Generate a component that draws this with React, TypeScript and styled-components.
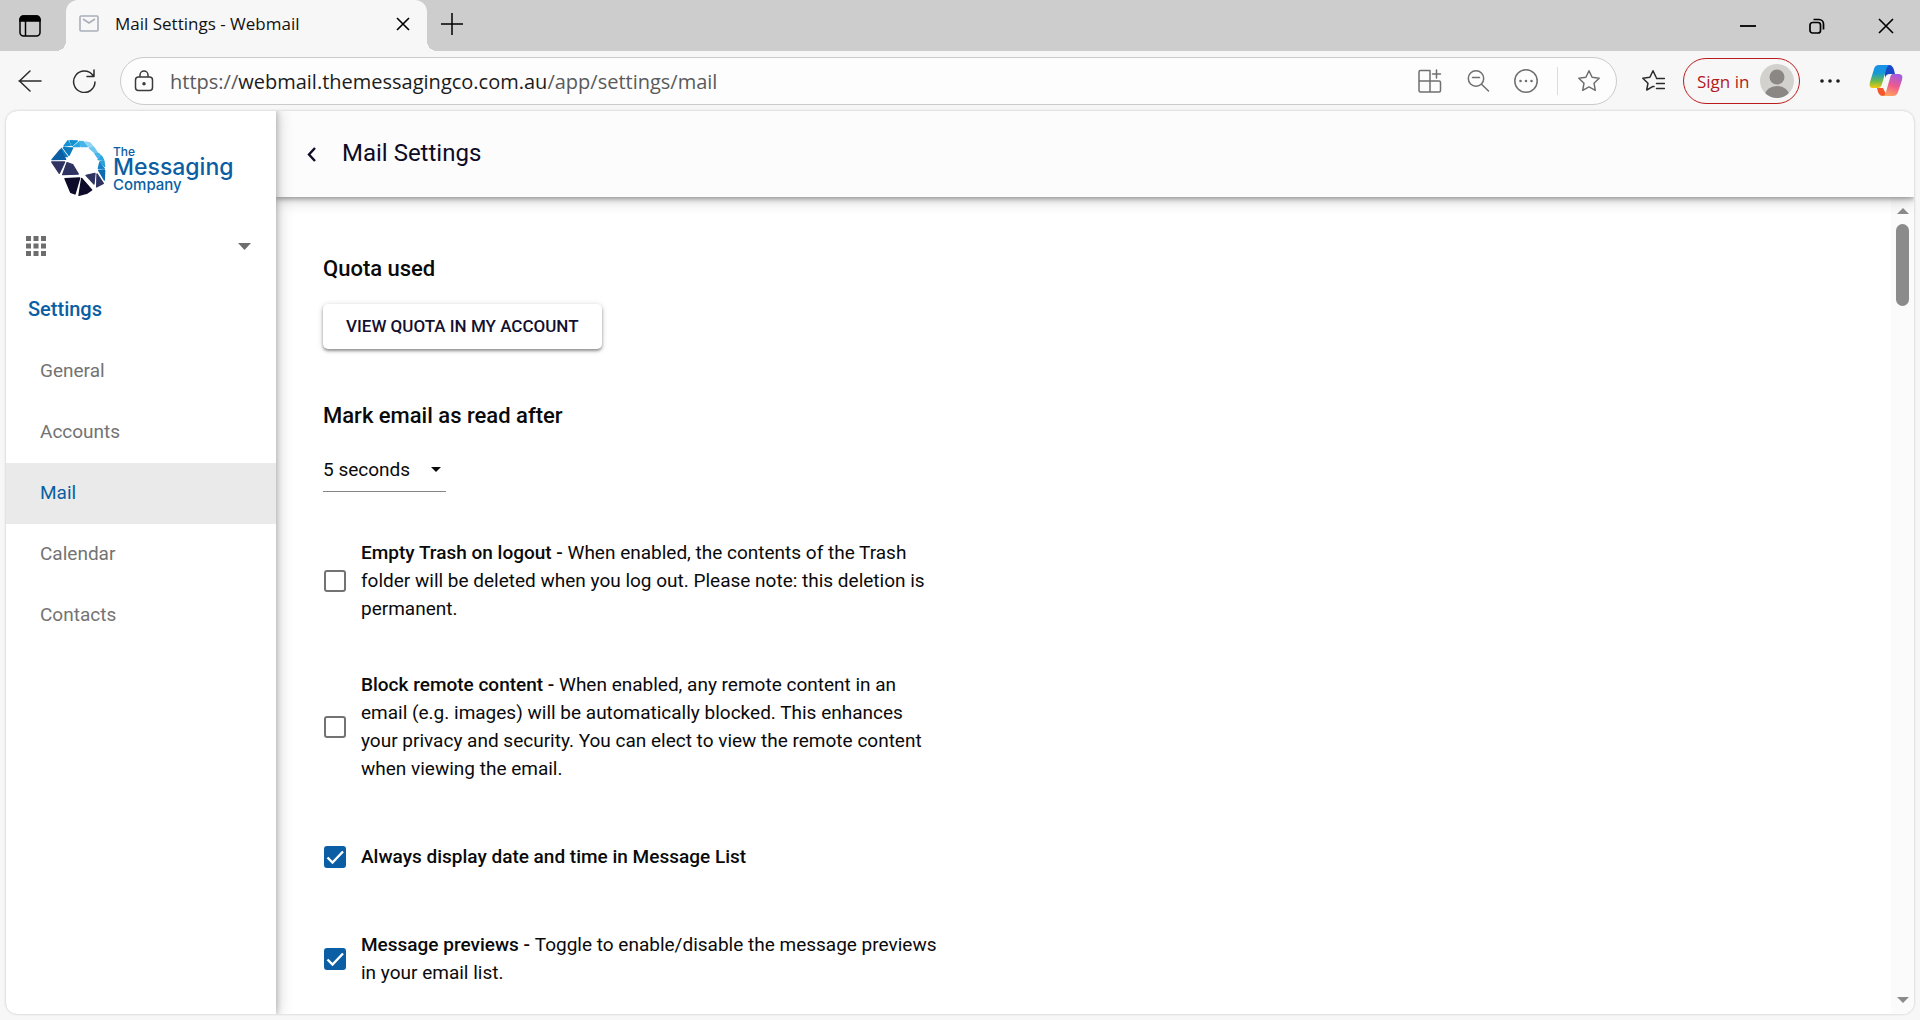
import React, { useState } from "react";
import styled, { createGlobalStyle } from "styled-components";

const ui = `"Open Sans", "Noto Sans", sans-serif`;
const roboto = `Roboto, "Liberation Sans", sans-serif`;

const Global = createGlobalStyle`
  *, *::before, *::after { box-sizing: border-box; }
  body { margin: 0; background: #f7f7f7; }
  button, input, select { font: inherit; color: inherit; }
  button { border: 0; background: none; padding: 0; cursor: pointer; }
`;

const Window = styled.div`
  display: flex;
  flex-direction: column;
  height: 100vh;
  overflow: hidden;
  font-family: ${ui};
  color: #1b1b1b;
`;

const TitleBar = styled.header`
  display: flex;
  flex: none;
  height: 51px;
  background: #cdcdcd;
`;

const IconButton = styled.button<{ $width: number }>`
  display: flex;
  align-items: center;
  justify-content: center;
  flex: none;
  width: ${(p) => p.$width}px;
  height: 100%;
`;

const NewTabButton = styled(IconButton)`
  padding-bottom: 4px;
`;

const FavouritesButton = styled(IconButton)`
  margin-right: 6px;
`;

const Tab = styled.div`
  position: relative;
  display: flex;
  align-items: center;
  width: 361px;
  margin: 0 0 0 6px;
  padding: 0 17px 4px 13px;
  background: #f7f7f7;
  border-radius: 12px 12px 0 0;
  font-size: 17px;
  color: #111;
  &::before, &::after {
    content: "";
    position: absolute;
    bottom: 0;
    width: 10px;
    height: 10px;
  }
  &::before { left: -10px; background: radial-gradient(circle at 0 0, transparent 10px, #f7f7f7 10px); }
  &::after { right: -10px; background: radial-gradient(circle at 100% 0, transparent 10px, #f7f7f7 10px); }
`;

const TabTitle = styled.span`
  flex: 1;
  margin-left: 16px;
  white-space: nowrap;
`;

const CloseTab = styled.button`
  display: flex;
  align-items: center;
`;

const Spacer = styled.div`
  flex: 1;
`;

const Toolbar = styled.div`
  display: flex;
  align-items: center;
  flex: none;
  height: 60px;
  padding: 0 8px 0 3px;
`;

const AddressBar = styled.form`
  display: flex;
  align-items: center;
  flex: 1;
  height: 48px;
  margin: 0 12px 0 10px;
  padding: 0 3px 0 13px;
  background: #fdfdfd;
  border: 1px solid #cbcbcb;
  border-radius: 24px;
`;

const Url = styled.label`
  position: relative;
  flex: 1;
  height: 100%;
  margin-left: 16px;
  font-size: 20px;
  line-height: 48px;
  color: #5a5a5a;
  b { font-weight: 400; color: #1b1b1b; }
`;

const UrlInput = styled.input`
  position: absolute;
  inset: 0;
  width: 100%;
  border: 0;
  outline: 0;
  background: none;
`;

const Divider = styled.span`
  width: 1px;
  height: 28px;
  margin: 0 7px;
  background: #dcdcdc;
`;

const SignIn = styled.button`
  display: flex;
  align-items: center;
  justify-content: space-between;
  width: 117px;
  height: 46px;
  padding: 0 5px 0 13px;
  border: 1px solid #b91c1c;
  border-radius: 23px;
  color: #b3191d;
  font-size: 17px;
  white-space: nowrap;
`;

const Page = styled.div`
  display: flex;
  flex: 1;
  min-height: 0;
  margin: 0 6px 6px;
  background: #fff;
  border-radius: 12px;
  box-shadow: 0 0 2px 1px #dedede;
  overflow: hidden;
  font-family: ${roboto};
`;

const Sidebar = styled.aside`
  position: relative;
  z-index: 2;
  display: flex;
  flex-direction: column;
  flex: none;
  width: 270px;
  background: #fff;
  box-shadow: 0 0 6px 1px rgba(0, 0, 0, 0.24), 4px 0 14px rgba(0, 0, 0, 0.14);
`;

const Brand = styled.a`
  display: block;
  height: 68px;
  margin: 26px 0 0 42px;
`;

const AppSwitch = styled.button`
  display: flex;
  align-items: center;
  justify-content: space-between;
  height: 60px;
  margin: 11px 25px 0 20px;
`;

const SectionTitle = styled.h2`
  margin: 0;
  padding: 18px 22px 17px;
  font-size: 20px;
  font-weight: 500;
  line-height: 30px;
  color: #0b5ea3;
`;

const NavLink = styled.a<{ $active?: boolean }>`
  display: flex;
  align-items: center;
  height: 61px;
  padding: 0 34px 2px;
  font-size: 19px;
  text-decoration: none;
  color: ${(p) => (p.$active ? "#0b5ea3" : "#737373")};
  background: ${(p) => (p.$active ? "#eaeaea" : "transparent")};
`;

const Main = styled.main`
  display: flex;
  flex-direction: column;
  flex: 1;
  min-width: 0;
`;

const PageHeader = styled.div`
  position: relative;
  z-index: 1;
  display: flex;
  align-items: center;
  gap: 16px;
  flex: none;
  height: 86px;
  padding: 0 22px 2px;
  background: #fcfcfc;
  box-shadow: 0 2px 5px rgba(0, 0, 0, 0.34), 0 4px 14px rgba(0, 0, 0, 0.16);
  color: #0e0b26;
`;

const PageTitle = styled.h1`
  margin: 0;
  font-size: 24px;
  font-weight: 400;
`;

const Body = styled.div`
  display: flex;
  flex: 1;
  min-height: 0;
`;

const Content = styled.div`
  flex: 1;
  min-width: 0;
  padding: 57px 47px 0;
  overflow: hidden;
  color: #0a0a0a;
`;

const Heading = styled.h3`
  margin: 0;
  font-size: 22px;
  font-weight: 500;
  line-height: 30px;
`;

const QuotaButton = styled.button`
  display: block;
  height: 45px;
  margin: 20px 0 52px;
  padding: 0 23px 2px;
  border-radius: 5px;
  background: #fff;
  box-shadow: 0 2px 3px rgba(0, 0, 0, 0.36), 0 1px 6px rgba(0, 0, 0, 0.16);
  font-size: 17px;
  font-weight: 500;
  color: #14102f;
`;

const SelectWrap = styled.div`
  display: flex;
  align-items: center;
  width: 123px;
  height: 46px;
  margin: 15px 0 47px;
  padding-top: 2px;
  border-bottom: 1px solid #858585;
`;

const Select = styled.select`
  width: 100%;
  height: 100%;
  padding: 0;
  border: 0;
  outline: 0;
  appearance: none;
  background: none;
  font-size: 19px;
`;

const Caret = styled.svg`
  flex: none;
  margin-left: -15px;
  pointer-events: none;
`;

const Options = styled.div`
  display: flex;
  flex-direction: column;
  gap: 48px;
`;

const Option = styled.label`
  display: flex;
  align-items: center;
  gap: 15px;
  max-width: 619px;
  min-height: 52px;
  font-size: 19px;
  line-height: 28px;
  b { font-weight: 500; }
`;

const Box = styled.span`
  display: grid;
  flex: none;
  width: 22px;
  height: 22px;
  margin-left: 1px;
  > * { grid-area: 1 / 1; }
  svg { pointer-events: none; }
`;

const Check = styled.input`
  appearance: none;
  width: 22px;
  height: 22px;
  margin: 0;
  border: 2px solid #737373;
  border-radius: 3px;
  &:checked { background: #0b5ea3; border-color: #0b5ea3; }
  &:not(:checked) + svg { visibility: hidden; }
`;

const Scrollbar = styled.div`
  display: flex;
  flex-direction: column;
  align-items: center;
  flex: none;
  width: 23px;
  padding: 11px 0;
  background: #fbfbfb;
`;

const Thumb = styled.div`
  width: 13px;
  height: 9%;
  min-height: 82px;
  margin: 10px 0 auto;
  border-radius: 7px;
  background: #8b8b8b;
`;

const Line = ({ size = 24, width = 1.5, color = "#2b2b2b", children }: any) => (
  <svg width={size} height={size} viewBox="0 0 24 24" fill="none" stroke={color} strokeWidth={width} strokeLinecap="round" strokeLinejoin="round" aria-hidden="true">
    {children}
  </svg>
);

const star = "M12 1.8l3.1 6.5 7.1.9-5.2 5 1.3 7.1L12 17.9l-6.3 3.4L7 14.2l-5.2-5 7.1-.9z";

const shards: [string, string][] = [
  ["60,36 72,20 79,34", "#1591d0"],
  ["78,20 100,21 84,35", "#1591d0"],
  ["88,38 106,24 108,38", "#2ba5df"],
  ["106,22 118,23 130,38 112,38", "#46b5ea"],
  ["124,24 138,27 148,39 134,38", "#8fd5f5"],
  ["136,42 150,41 160,56 152,56", "#6cc7f1"],
  ["153,59 164,58 171,66 162,72", "#46b5ea"],
  ["162,77 173,67 179,78", "#2ba5df"],
  ["168,82 180,81 182,98", "#2b9fd9"],
  ["163,104 167,86 181,105", "#1583c6"],
  ["164,109 182,109 181,138", "#0b6bb0"],
  ["58,41 86,42 75,64", "#0e79bd"],
  ["52,43 70,68 56,66", "#0e79bd"],
  ["49,47 65,76 24,77", "#0b5ea3"],
  ["23,84 62,84 46,118", "#2f3361"],
  ["69,86 86,92 103,120 56,122", "#2f3361"],
  ["63,134 107,132 93,180 80,175", "#0d0a2a"],
  ["113,133 143,168 130,177 105,184", "#0d0a2a"],
  ["126,124 153,118 150,150", "#2f3361"],
  ["159,120 178,148 158,159", "#2f3361"],
];

const Logo = () => (
  <svg width="190" height="68" viewBox="48 137 190 68" role="img" aria-label="The Messaging Company">
    <g transform="translate(44 134) scale(.3333)" strokeLinejoin="round" strokeWidth="4">
      {shards.map(([points, color]) => <polygon key={points} points={points} fill={color} stroke={color} />)}
    </g>
    <g fill="#0b5ea3" fontFamily="Inter, Lato, sans-serif" fontWeight="500">
      <text x="113" y="156" fontSize="12">The</text>
      <text x="113" y="175" fontSize="23">Messaging</text>
      <text x="113" y="190" fontSize="15">Company</text>
    </g>
  </svg>
);

const Copilot = () => (
  <svg width="34" height="32" viewBox="0 0 34 32" aria-hidden="true">
    <defs>
      <linearGradient id="cpA" x1="0" y1="0" x2="0" y2="1">
        <stop offset="0" stopColor="#1a90ea" /><stop offset=".35" stopColor="#1499d8" /><stop offset=".7" stopColor="#6cba4a" /><stop offset="1" stopColor="#f8c80c" />
      </linearGradient>
      <linearGradient id="cpB" x1=".6" y1="0" x2=".3" y2="1">
        <stop offset="0" stopColor="#a55be0" /><stop offset=".5" stopColor="#ee5a8e" /><stop offset="1" stopColor="#ffa45c" />
      </linearGradient>
    </defs>
    <path d="M16 0h4c3 0 4 2 5 5l1 4h-5c-3 0-4 1-5 4z" fill="#1a48c8" />
    <path d="M8 23h6l4 8h-4c-3 0-4-2-5-4z" fill="#f5562e" />
    <path d="M10 0h11c-2 0-3 2-4 5l-4 14c-1 3-2 4-4 4H4c-3 0-4-2-3-6L5 4c1-3 2-4 5-4z" fill="url(#cpA)" />
    <path d="M24 9h5c4 0 5 2 4 6l-4 12c-1 3-3 4-5 4H13c2 0 3-1 4-4l4-14c1-3 1-4 3-4z" fill="url(#cpB)" />
  </svg>
);

const options = [
  { title: "Empty Trash on logout", text: "When enabled, the contents of the Trash folder will be deleted when you log out. Please note: this deletion is permanent.", on: false },
  { title: "Block remote content", text: "When enabled, any remote content in an email (e.g. images) will be automatically blocked. This enhances your privacy and security. You can elect to view the remote content when viewing the email.", on: false },
  { title: "Always display date and time in Message List", text: "", on: true },
  { title: "Message previews", text: "Toggle to enable/disable the message previews in your email list.", on: true },
];

const OptionRow = ({ title, text, on }: { title: string; text: string; on: boolean }) => {
  const [checked, setChecked] = useState(on);
  return (
    <Option>
      <Box>
        <Check type="checkbox" checked={checked} onChange={(e) => setChecked(e.target.checked)} />
        <svg width="22" height="22" viewBox="0 0 22 22" fill="none" stroke="#fff" strokeWidth="2.4" aria-hidden="true">
          <path d="M3.500 11.500l5 5L19 5.500" />
        </svg>
      </Box>
      <span>
        <b>{text ? `${title} - ` : title}</b>
        {text}
      </span>
    </Option>
  );
};

export default function App() {
  return (
    <Window>
      <Global />
      <TitleBar>
        <IconButton $width={60} aria-label="Tab actions">
          <svg width="22" height="22" viewBox="0 0 22 22" fill="none" stroke="#000" strokeWidth="1.5" aria-hidden="true">
            <rect x="1" y="1" width="20" height="20" rx="3.500" />
            <path d="M1 6V4.500A3.500 3.500 0 0 1 4.500 1h13A3.500 3.500 0 0 1 21 4.500V6z" fill="#000" />
            <path d="M6.500 6v15" />
          </svg>
        </IconButton>
        <Tab>
          <svg width="20" height="17" viewBox="0 0 20 17" fill="none" stroke="#a9afb9" strokeWidth="1.6" aria-hidden="true">
            <rect x="1" y="1" width="18" height="15" rx="1" />
            <path d="M4 4l6 4 6-4" />
          </svg>
          <TabTitle>Mail Settings - Webmail</TabTitle>
          <CloseTab aria-label="Close tab">
            <svg width="14" height="14" viewBox="0 0 14 14" stroke="#000" strokeWidth="1.600" aria-hidden="true"><path d="M1 1l12 12M13 1L1 13" /></svg>
          </CloseTab>
        </Tab>
        <NewTabButton $width={50} aria-label="New tab">
          <svg width="22" height="22" viewBox="0 0 22 22" stroke="#000" strokeWidth="1.500" aria-hidden="true"><path d="M11 0v22M0 11h22" /></svg>
        </NewTabButton>
        <Spacer />
        <IconButton $width={69} aria-label="Minimise">
          <svg width="16" height="16" viewBox="0 0 16 16" stroke="#000" strokeWidth="1.800" aria-hidden="true"><path d="M0 8h16" /></svg>
        </IconButton>
        <IconButton $width={69} aria-label="Restore">
          <svg width="16" height="16" viewBox="0 0 16 16" fill="none" stroke="#000" strokeWidth="1.700" aria-hidden="true">
            <rect x="1" y="4.500" width="10.500" height="10.500" rx="2.500" />
            <path d="M4.500 1.500H10a4.500 4.500 0 0 1 4.500 4.500v5.500" />
          </svg>
        </IconButton>
        <IconButton $width={69} aria-label="Close window">
          <svg width="16" height="16" viewBox="0 0 16 16" stroke="#000" strokeWidth="1.600" aria-hidden="true"><path d="M1 1l14 14M15 1L1 15" /></svg>
        </IconButton>
      </TitleBar>

      <Toolbar>
        <IconButton $width={54} aria-label="Back"><Line><path d="M23 12H1M12 2L1.500 12 12 22" /></Line></IconButton>
        <IconButton $width={53} aria-label="Refresh"><Line><path d="M21 6.500A10.700 10.700 0 1 0 23 13M22 1v6.500h-7" /></Line></IconButton>
        <AddressBar onSubmit={(e) => e.preventDefault()}>
          <svg width="20" height="22" viewBox="0 0 20 22" fill="none" stroke="#3b3b3b" strokeWidth="1.500" aria-hidden="true">
            <rect x="1.500" y="7" width="17" height="13.500" rx="3" />
            <path d="M6 7V5a4 4 0 0 1 8 0v2" />
            <circle cx="10" cy="13.700" r="1" fill="#3b3b3b" />
          </svg>
          <Url>
            https://<b>webmail.themessagingco.com.au</b>/app/settings/mail
            <UrlInput aria-label="Address" />
          </Url>
          <IconButton type="button" $width={48} aria-label="App available">
            <Line color="#6f6f6f"><path d="M12 12V1.500H2.500A1.500 1.500 0 0 0 1 3v18.500A1.500 1.500 0 0 0 2.500 23H21a1.500 1.500 0 0 0 1.500-1.500v-8A1.500 1.500 0 0 0 21 12H1M12 12v11M18.500 1v8M14.500 5h8" /></Line>
          </IconButton>
          <IconButton type="button" $width={48} aria-label="Zoom out">
            <Line color="#6f6f6f"><circle cx="10" cy="9.500" r="7.700" /><path d="M15.500 15.200L22.500 22M6.500 8.500h7" /></Line>
          </IconButton>
          <IconButton type="button" $width={48} aria-label="More actions">
            <Line color="#6f6f6f"><circle cx="12" cy="12" r="11.200" /><path d="M6.500 12h.01M12 12h.01M17.500 12h.01" strokeWidth="2.600" /></Line>
          </IconButton>
          <Divider />
          <IconButton type="button" $width={48} aria-label="Add to favourites"><Line color="#6f6f6f"><path d={star} /></Line></IconButton>
        </AddressBar>
        <FavouritesButton $width={48} aria-label="Favourites">
          <Line><path d="M13 17.600l-1-.2-6.300 3.600L7 14.200l-5.200-5 7.100-.9L12 1.800l3.100 6.500M15.500 9.500h8M15.500 14.500h8M15.500 19.500h8" /></Line>
        </FavouritesButton>
        <SignIn>
          Sign in
          <svg width="34" height="34" viewBox="0 0 34 34" aria-hidden="true">
            <clipPath id="av"><circle cx="17" cy="17" r="17" /></clipPath>
            <g clipPath="url(#av)">
              <rect width="34" height="34" fill="#d3d1ce" />
              <circle cx="17" cy="13" r="7.500" fill="#8b8784" />
              <ellipse cx="17" cy="31" rx="12" ry="9" fill="#8b8784" />
            </g>
          </svg>
        </SignIn>
        <IconButton $width={60} aria-label="Settings and more">
          <svg width="20" height="6" viewBox="0 0 20 6" fill="#1b1b1b" aria-hidden="true"><circle cx="2" cy="3" r="1.800" /><circle cx="10" cy="3" r="1.800" /><circle cx="18" cy="3" r="1.800" /></svg>
        </IconButton>
        <IconButton $width={52} aria-label="Copilot"><Copilot /></IconButton>
      </Toolbar>

      <Page>
        <Sidebar>
          <Brand href="#"><Logo /></Brand>
          <AppSwitch aria-label="Switch app">
            <svg width="20" height="20" viewBox="0 0 20 20" fill="#6d6d6d" aria-hidden="true">
              {[0, 7.5, 15].map((y) => [0, 7.5, 15].map((x) => <rect key={`${x}-${y}`} x={x} y={y} width="5" height="5" />))}
            </svg>
            <svg width="13" height="7" viewBox="0 0 13 7" fill="#6d6d6d" aria-hidden="true"><path d="M0 0h13L6.500 7z" /></svg>
          </AppSwitch>
          <SectionTitle>Settings</SectionTitle>
          <nav aria-label="Settings">
            {["General", "Accounts", "Mail", "Calendar", "Contacts"].map((n) => (
              <NavLink key={n} href={`#${n.toLowerCase()}`} $active={n === "Mail"}>{n}</NavLink>
            ))}
          </nav>
        </Sidebar>
        <Main>
          <PageHeader>
            <button aria-label="Back to settings">
              <svg width="28" height="28" viewBox="0 0 28 28" fill="none" stroke="#0e0b26" strokeWidth="2.400" aria-hidden="true"><path d="M17 11l-6 6.500 6 6.500" /></svg>
            </button>
            <PageTitle>Mail Settings</PageTitle>
          </PageHeader>
          <Body>
            <Content>
              <Heading>Quota used</Heading>
              <QuotaButton>VIEW QUOTA IN MY ACCOUNT</QuotaButton>
              <Heading as="label" htmlFor="mark-read">Mark email as read after</Heading>
              <SelectWrap>
                <Select id="mark-read" defaultValue="5 seconds">
                  <option>5 seconds</option>
                </Select>
                <Caret width="10" height="5" viewBox="0 0 10 5" fill="#0a0a0a" aria-hidden="true"><path d="M0 0h10L5 5z" /></Caret>
              </SelectWrap>
              <Options>
                {options.map((o) => <OptionRow key={o.title} {...o} />)}
              </Options>
            </Content>
            <Scrollbar aria-hidden="true">
              <svg width="12" height="6" viewBox="0 0 12 6" fill="#8b8b8b"><path d="M0 6h12L6 0z" /></svg>
              <Thumb />
              <svg width="12" height="6" viewBox="0 0 12 6" fill="#8b8b8b"><path d="M0 0h12L6 6z" /></svg>
            </Scrollbar>
          </Body>
        </Main>
      </Page>
    </Window>
  );
}
